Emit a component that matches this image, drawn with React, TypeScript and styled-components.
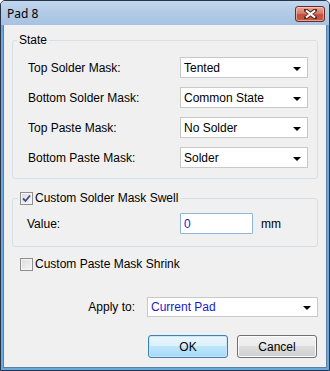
import styled, { createGlobalStyle } from "styled-components";

const GlobalStyle = createGlobalStyle`
    html, body {
        margin: 0;
        padding: 0;
        background: #ffffff;
    }
    body {
        font-family: "Liberation Sans", Arial, sans-serif;
    }
`;

const Window = styled.div`
    box-sizing: border-box;
    width: 330px;
    height: 371px;
    display: flex;
    flex-direction: column;
    border: 1px solid #253448;
    border-radius: 5px 5px 0 0;
    background: #6aa9dd;
    overflow: hidden;
`;

const TitleBar = styled.div`
    height: 24px;
    flex: none;
    display: flex;
    align-items: center;
    justify-content: space-between;
    padding: 0 4px 0 6px;
    background: linear-gradient(180deg, #c3d7ee 0%, #b2cbe7 45%, #a7c3e3 100%);
`;

const Title = styled.span`
    font-family: "Noto Sans", "Open Sans", sans-serif;
    font-size: 12px;
    color: #000000;
`;

const CloseButton = styled.div`
    box-sizing: border-box;
    width: 30px;
    height: 16px;
    margin-top: 1px;
    display: flex;
    align-items: center;
    justify-content: center;
    border: 1px solid #6b2b22;
    border-radius: 3px;
    background: linear-gradient(180deg, #e9a99b 0%, #d47a68 45%, #c24f3c 55%, #c55a45 100%);
    box-shadow: inset 0 0 0 1px rgba(255, 220, 210, 0.55);
`;

const Client = styled.div`
    flex: 1;
    display: flex;
    flex-direction: column;
    margin: 0 2px 2px;
    border: 1px solid #5c7fa6;
    border-top: none;
    background: #f0f0f0;
    padding-top: 8px;
    font-size: 12px;
    color: #000000;
`;

const GroupBox = styled.fieldset<{ $gap?: number }>`
    margin: ${(p) => (p.$gap ? `${p.$gap}px` : "0")} 8px 0;
    padding: 0;
    border: 1px solid #d5dfe5;
    border-radius: 3px;
    min-width: 0;
`;

const Legend = styled.legend<{ $indent: number }>`
    display: flex;
    align-items: center;
    gap: 2px;
    height: 14px;
    line-height: 14px;
    margin-left: ${(p) => p.$indent}px;
    padding: 0 2px;
`;

const GroupBody = styled.div<{ $top: number; $bottom: number; $left: number }>`
    display: flex;
    flex-direction: column;
    gap: 9px;
    padding: ${(p) => `${p.$top}px 9px ${p.$bottom}px ${p.$left}px`};
`;

const FieldRow = styled.div<{ $labelWidth: number }>`
    display: grid;
    grid-template-columns: ${(p) => p.$labelWidth}px auto auto;
    justify-content: start;
    align-items: center;
    column-gap: 8px;
    height: 21px;
`;

const Label = styled.span`
    white-space: nowrap;
`;

const Combo = styled.div<{ $width: number; $height?: number; $blue?: boolean }>`
    box-sizing: border-box;
    width: ${(p) => p.$width}px;
    height: ${(p) => p.$height ?? 21}px;
    display: flex;
    align-items: center;
    justify-content: space-between;
    padding: 0 6px 0 3px;
    background: #ffffff;
    border: 1px solid #c9c9c9;
    color: ${(p) => (p.$blue ? "#1a1acc" : "#000000")};
    white-space: nowrap;
`;

const Arrow = styled.span`
    width: 0;
    height: 0;
    border-left: 4px solid transparent;
    border-right: 4px solid transparent;
    border-top: 4px solid #000000;
    margin-top: 2px;
`;

const TextInput = styled.div`
    box-sizing: border-box;
    width: 73px;
    height: 21px;
    display: flex;
    align-items: center;
    padding: 0 3px;
    background: #ffffff;
    border: 1px solid #8fb4d9;
    border-radius: 1px;
    color: #1a1acc;
`;

const CheckBox = styled.span`
    box-sizing: border-box;
    width: 13px;
    height: 13px;
    flex: none;
    display: inline-flex;
    align-items: center;
    justify-content: center;
    border: 1px solid #8e8f8f;
    background: linear-gradient(135deg, #dcdcdc 0%, #f6f6f6 100%);
    box-shadow: inset 0 0 0 1px #f4f4f4;
`;

const CheckRow = styled.div`
    display: flex;
    align-items: center;
    gap: 2px;
    height: 14px;
    margin: 10px 0 0 16px;
`;

const ApplyRow = styled.div`
    display: flex;
    align-items: center;
    justify-content: flex-end;
    gap: 12px;
    margin: 26px 8px 0 0;
`;

const ButtonRow = styled.div`
    display: flex;
    justify-content: flex-end;
    gap: 9px;
    margin: 18px 9px 0 0;
`;

const Button = styled.div<{ $default?: boolean }>`
    box-sizing: border-box;
    width: 80px;
    height: 23px;
    display: flex;
    align-items: center;
    justify-content: center;
    border-radius: 3px;
    border: 1px solid ${(p) => (p.$default ? "#3c7fb1" : "#707070")};
    background: ${(p) =>
        p.$default
            ? "linear-gradient(180deg, #eaf6fd 0%, #d9f0fc 50%, #bee6fd 50%, #a7d9f5 100%)"
            : "linear-gradient(180deg, #f2f2f2 0%, #ebebeb 50%, #dddddd 50%, #cfcfcf 100%)"};
    box-shadow: inset 0 0 0 1px ${(p) => (p.$default ? "#c6e6f8" : "#fcfcfc")};
`;

const CloseGlyph = () => (
    <svg width="13" height="10" viewBox="0 0 13 10">
        <path
            d="M1.5 1 L11.5 9 M11.5 1 L1.5 9"
            stroke="#5a2a22"
            strokeWidth="4"
            strokeLinecap="round"
        />
        <path d="M2 1.5 L11 8.5 M11 1.5 L2 8.5" stroke="#ffffff" strokeWidth="2.2" />
    </svg>
);

const Tick = () => (
    <svg width="9" height="9" viewBox="0 0 9 9">
        <path d="M1 4.5 L3.5 7 L8 1.5" fill="none" stroke="#3d4f8e" strokeWidth="1.8" />
    </svg>
);

const states = [
    { label: "Top Solder Mask:", value: "Tented" },
    { label: "Bottom Solder Mask:", value: "Common State" },
    { label: "Top Paste Mask:", value: "No Solder" },
    { label: "Bottom Paste Mask:", value: "Solder" },
];

const App = () => {
    return (
        <>
            <GlobalStyle />
            <Window>
                <TitleBar>
                    <Title>Pad 8</Title>
                    <CloseButton>
                        <CloseGlyph />
                    </CloseButton>
                </TitleBar>
                <Client>
                    <GroupBox>
                        <Legend $indent={4}>State</Legend>
                        <GroupBody $top={10} $bottom={10} $left={15}>
                            {states.map((s) => (
                                <FieldRow key={s.label} $labelWidth={144}>
                                    <Label>{s.label}</Label>
                                    <Combo $width={128}>
                                        {s.value}
                                        <Arrow />
                                    </Combo>
                                </FieldRow>
                            ))}
                        </GroupBody>
                    </GroupBox>

                    <GroupBox $gap={12}>
                        <Legend $indent={5}>
                            <CheckBox>
                                <Tick />
                            </CheckBox>
                            Custom Solder Mask Swell
                        </Legend>
                        <GroupBody $top={8} $bottom={12} $left={14}>
                            <FieldRow $labelWidth={145}>
                                <Label>Value:</Label>
                                <TextInput>0</TextInput>
                                <Label>mm</Label>
                            </FieldRow>
                        </GroupBody>
                    </GroupBox>

                    <CheckRow>
                        <CheckBox />
                        Custom Paste Mask Shrink
                    </CheckRow>

                    <ApplyRow>
                        <Label>Apply to:</Label>
                        <Combo $width={171} $height={20} $blue>
                            Current Pad
                            <Arrow />
                        </Combo>
                    </ApplyRow>

                    <ButtonRow>
                        <Button $default>OK</Button>
                        <Button>Cancel</Button>
                    </ButtonRow>
                </Client>
            </Window>
        </>
    );
};

export default App;
